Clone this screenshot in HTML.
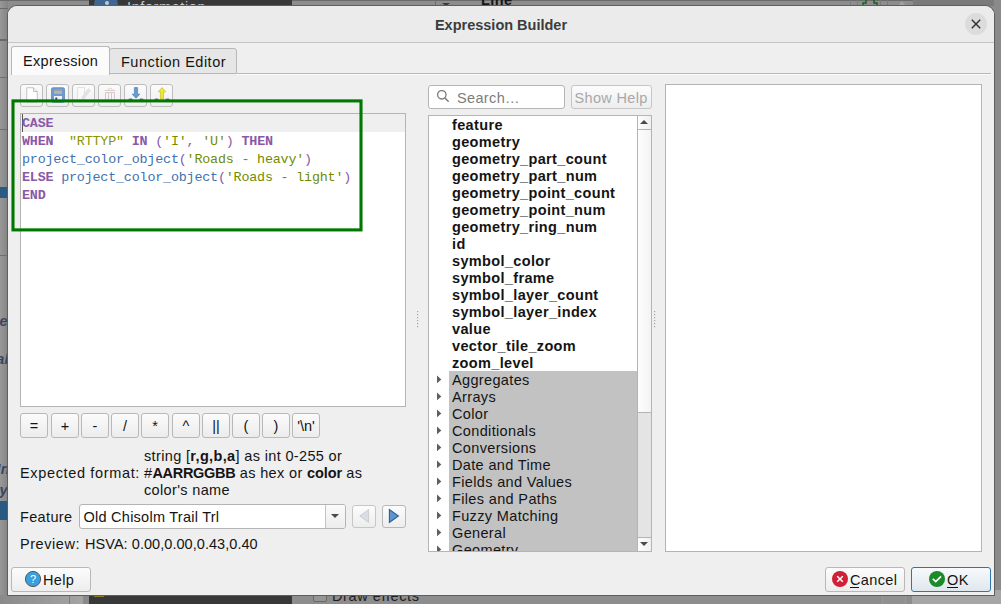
<!DOCTYPE html>
<html><head><meta charset="utf-8">
<style>
*{box-sizing:border-box;margin:0;padding:0}
html,body{width:1001px;height:604px;overflow:hidden}
body{position:relative;background:#8d8d8d;font-family:"Liberation Sans",sans-serif;font-size:14px;color:#141414}
.a{position:absolute}
.t{position:absolute;white-space:pre;line-height:17px;font-size:14.5px;letter-spacing:0.35px}
.dlg{left:8px;top:6px;width:986px;height:589px;background:#efefef;border-radius:9px 9px 0 0;box-shadow:0 0 0 1px #5e5e5e}
.btn{position:absolute;border:1px solid #b8b8b8;border-radius:3px;background:linear-gradient(#fcfcfc,#ededed)}
.mono{position:absolute;font-family:"Liberation Mono",monospace;font-size:13.4px;letter-spacing:-0.2px;line-height:18px;white-space:pre;color:#4d4d4c}
.kw{color:#8959a8;font-weight:bold}
.op{color:#8959a8}
.fn{color:#4271ae}
.st{color:#718c00}
.qi{color:#8c9400}
.ob{position:absolute;top:413px;width:28px;height:25px;border:1px solid #b8b8b8;border-radius:3px;background:linear-gradient(#fbfbfb,#ececec);text-align:center;line-height:25px;font-size:14.5px;color:#141414}
.tb{position:absolute;top:84px;width:23px;height:23px;border:1px solid #bdbdbd;border-radius:3px;background:linear-gradient(#fbfbfb,#efefef)}
.li{position:absolute;margin-top:1px;left:452px;white-space:pre;font-size:14.5px;letter-spacing:0.35px;line-height:17px}
.b{font-weight:bold}
.arr{position:absolute;left:437px;width:0;height:0;border-left:4px solid #5a5a5a;border-top:3.5px solid transparent;border-bottom:3.5px solid transparent}
</style></head><body>
<!-- background app -->
<div class="a" style="left:0;top:0;width:8px;height:604px;background:linear-gradient(90deg,#989898,#848484)"></div>
<div class="a" style="left:0;top:0;width:1001px;height:1px;background:#6a6a6a"></div>
<div class="a" style="left:0;top:8px;width:8px;height:1px;background:#6a6a6a"></div>
<div class="a" style="left:0;top:77px;width:8px;height:1px;background:#6f6f6f"></div>
<div class="a" style="left:0;top:39px;width:8px;height:2px;background:#6a6a6a"></div>
<div class="a" style="left:0;top:129px;width:8px;height:1px;background:#6f6f6f"></div>
<div class="a" style="left:0;top:255px;width:8px;height:1px;background:#6f6f6f"></div>
<div class="a" style="left:89px;top:0;width:203px;height:6px;background:#383838;overflow:hidden"><div class="a" style="left:5px;top:-7px;width:24px;height:24px;border-radius:50%;background:#3e6690"></div><div class="a" style="left:16px;top:1px;width:4px;height:4px;border-radius:50%;background:#c8c8c8"></div><div class="t" style="left:38px;top:-1px;color:#c8c8c8;letter-spacing:0.6px">Information</div></div>
<div class="a" style="left:0;top:595px;width:89px;height:9px;background:linear-gradient(90deg,#8a8a8a,#a6a6a6)"></div>
<div class="a" style="left:69px;top:595px;width:1px;height:9px;background:#7a7a7a"></div>
<div class="a" style="left:83px;top:595px;width:6px;height:9px;background:#8a8a8a"></div>
<div class="a" style="left:89px;top:595px;width:203px;height:9px;background:#383838"></div>
<div class="a" style="left:94px;top:595px;width:10px;height:2px;background:#8a7a20"></div>
<div class="a" style="left:0;top:187px;width:8px;height:11px;background:#2a5a82"></div>
<div class="a" style="left:0;top:501px;width:8px;height:19px;background:#2a5a82"></div>
<div class="a" style="left:913px;top:0;width:88px;height:6px;background:#7a7a7a"></div>
<div class="a" style="left:994px;top:0;width:7px;height:604px;background:#8a8a8a"></div>
<div class="a" style="left:313px;top:588px;width:14px;height:14px;border:1px solid #6a6a6a;border-radius:2px;background:#959595"></div>
<div class="t" style="left:332px;top:587.5px;color:#1e1e1e;letter-spacing:0.6px">Draw effects</div>
<div class="t" style="left:481px;top:-8px;color:#161616;font-weight:bold;letter-spacing:0.4px">Line</div>
<div class="a" style="left:435px;top:0;width:1px;height:6px;background:#6e6e6e"></div>
<div class="a" style="left:442px;top:3px;width:0;height:0;border-top:3px solid #3a3a3a;border-left:4px solid transparent;border-right:4px solid transparent"></div>
<svg class="a" style="left:840px;top:0" width="75" height="6"><path d="M10.5 0V6M17.5 0V6M40.5 0V6M47.5 0V6" stroke="#7a7a7a" stroke-width="1"/><path d="M26 0V3H23V6M34 0V3H37V6" fill="none" stroke="#1f5f1f" stroke-width="1.5"/><path d="M58 6L62 1L66 6" fill="#a0a0a0"/></svg>
<div class="a" style="left:0;top:300px;width:8px;height:230px;overflow:hidden">
<div class="t" style="right:0;top:13px;font-style:italic;font-weight:bold;color:#3a4660">ce</div>
<div class="t" style="right:-1px;top:51px;font-style:italic;font-weight:bold;color:#3a4660">al</div>
<div class="t" style="right:-2px;top:161px;font-style:italic;font-weight:bold;color:#3a4660">In</div>
<div class="t" style="right:0;top:182px;font-style:italic;font-weight:bold;color:#3a4660">y</div>
</div>
<div class="a" style="left:912px;top:590px;width:89px;height:14px;background:#a6a6a6"></div>
<div class="a" style="left:882px;top:592px;width:24px;height:14px;border:1px solid #9a9a9a;border-radius:3px;background:#909090"></div>
<div class="a dlg"></div>
<!-- title bar -->
<div class="a" style="left:8px;top:6px;width:986px;height:37px;background:#ebebeb;border-bottom:1px solid #c6c6c6;border-radius:9px 9px 0 0"></div>
<div class="t" style="left:8px;width:986px;top:17px;text-align:center;font-weight:bold;font-size:14.5px;letter-spacing:0;color:#3c3c3c">Expression Builder</div>
<div class="a" style="left:965px;top:13px;width:22px;height:22px;border-radius:50%;background:#dcdcdc"></div>
<svg class="a" style="left:965px;top:13px" width="22" height="22"><path d="M6.8 6.8L15.2 15.2M15.2 6.8L6.8 15.2" stroke="#2e2e2e" stroke-width="1.4"/></svg>

<!-- tabs -->
<div class="a" style="left:237px;top:73px;width:754px;height:1px;background:#b8b8b8"></div>
<div class="a" style="left:237px;top:74px;width:754px;height:1px;background:#fbfbfb"></div>
<div class="a" style="left:109px;top:48px;width:128px;height:26px;background:#e6e6e6;border:1px solid #b8b8b8;border-radius:3px 3px 0 0"></div>
<div class="a" style="left:11px;top:46px;width:99px;height:29px;background:#fbfbfb;border:1px solid #b8b8b8;border-bottom:none;border-radius:3px 3px 0 0"></div>
<div class="t" style="left:23px;top:53px">Expression</div>
<div class="t" style="left:121px;top:54px;letter-spacing:0.5px">Function Editor</div>

<!-- toolbar -->
<div class="tb" style="left:20px"></div>
<div class="tb" style="left:46px"></div>
<div class="tb" style="left:72px"></div>
<div class="tb" style="left:98px"></div>
<div class="tb" style="left:124px"></div>
<div class="tb" style="left:150px"></div>

<svg class="a" style="left:0;top:0" width="180" height="112">
<!-- new -->
<path d="M26.75 87.75H33.5L37.25 91.5V102H26.75Z" fill="#fff" stroke="#c2c2c2" stroke-width="1"/>
<path d="M33.5 87.75V91.5H37.25" fill="#f4f4f4" stroke="#b8b8b8" stroke-width="0.9"/>
<!-- save -->
<rect x="51.5" y="87.75" width="13" height="14.5" rx="1.5" fill="#6b9bd2" stroke="#5a87bd" stroke-width="0.8"/>
<rect x="54" y="89.2" width="8" height="4.6" fill="#b4b4b4"/>
<rect x="54" y="89.2" width="8" height="1.6" fill="#9a9a9a"/>
<rect x="54" y="96" width="8" height="6" fill="#f4f4f4"/>
<rect x="55.3" y="97.5" width="2" height="2.4" fill="#2b4f86"/>
<!-- edit disabled -->
<path d="M77.5 87.5H84.5V100H77.5Z" fill="#fafafa" stroke="#e2e2e2" stroke-width="1"/>
<path d="M89.6 89.2L82.2 98.6" stroke="#dcdcd4" stroke-width="3"/>
<path d="M89.6 89.2L82.2 98.6" stroke="#ececea" stroke-width="1"/>
<!-- trash disabled -->
<path d="M104.8 90.4H115.2" stroke="#d9c6c6" stroke-width="1"/>
<path d="M108.5 90V88.4H111.8V90" fill="none" stroke="#e2d4d4" stroke-width="0.8"/>
<path d="M105.5 92.5H114.5V101H105.5Z" fill="none" stroke="#d9c6c6" stroke-width="1"/>
<path d="M108.5 93V101M111.5 93V101" stroke="#d9c6c6" stroke-width="1"/>
<!-- import -->
<path d="M134.4 87.6H137.6V94.2H139.8L136 98.2L132.2 94.2H134.4Z" fill="#6a9bd0" stroke="#4f7fb4" stroke-width="0.7"/>
<path d="M129.5 99.6H131.5M140.5 99.6H142.5" stroke="#5a7a96" stroke-width="2" stroke-linecap="round"/>
<!-- export -->
<path d="M162 87.6L165.8 91.8H163.6V99H160.4V91.8H158.2Z" fill="#ece73a" stroke="#c9c21e" stroke-width="0.7"/>
<path d="M155.5 99.6H157.5M166.5 99.6H168.5" stroke="#5a7a96" stroke-width="2" stroke-linecap="round"/>
</svg>

<!-- editor -->
<div class="a" style="left:20px;top:113px;width:386px;height:294px;background:#fff;border:1px solid #b4b4b4"></div>
<div class="a" style="left:21px;top:114px;width:384px;height:18px;background:#efefef"></div>
<div class="a" style="left:22px;top:114px;width:1px;height:18px;background:#555"></div>
<div class="mono" style="left:22px;top:115px"><span class="kw">CASE</span>
<span class="kw">WHEN</span>  <span class="qi">"RTTYP"</span> <span class="kw">IN</span> <span class="op">(</span><span class="st">'I'</span><span class="op">,</span> <span class="st">'U'</span><span class="op">)</span> <span class="kw">THEN</span>
<span class="fn">project_color_object</span><span class="op">(</span><span class="st">'Roads - heavy'</span><span class="op">)</span>
<span class="kw">ELSE</span> <span class="fn">project_color_object</span><span class="op">(</span><span class="st">'Roads - light'</span><span class="op">)</span>
<span class="kw">END</span></div>

<!-- green annotation -->
<svg class="a" style="left:0;top:0" width="400" height="240"><rect x="13" y="100.9" width="348" height="129" fill="none" stroke="#007800" stroke-width="3.1"/></svg>

<!-- operator buttons -->
<div class="ob" style="left:20px">=</div>
<div class="ob" style="left:51px">+</div>
<div class="ob" style="left:81px">-</div>
<div class="ob" style="left:111px">/</div>
<div class="ob" style="left:141px">*</div>
<div class="ob" style="left:172px">^</div>
<div class="ob" style="left:202px">||</div>
<div class="ob" style="left:232px">(</div>
<div class="ob" style="left:262px">)</div>
<div class="ob" style="left:292px">'\n'</div>

<!-- expected format -->
<div class="t" style="left:20px;top:465px;letter-spacing:0.65px">Expected format:</div>
<div class="t" style="left:144px;top:448px">string [<span class="b">r,g,b,a</span>] as int 0-255 or</div>
<div class="t" style="left:144px;top:465px">#<span class="b" style="letter-spacing:-0.3px">AARRGGBB</span> as hex or <span class="b" style="letter-spacing:-0.1px">color</span> as</div>
<div class="t" style="left:144px;top:482px">color's name</div>

<!-- feature -->
<div class="t" style="left:20px;top:509px">Feature</div>
<div class="a" style="left:79px;top:504px;width:267px;height:25px;background:#fff;border:1px solid #b4b4b4;border-radius:3px"></div>
<div class="a" style="left:325px;top:505px;width:20px;height:23px;background:linear-gradient(#fbfbfb,#ececec);border-left:1px solid #c4c4c4;border-radius:0 2px 2px 0"></div>
<div class="a" style="left:330.5px;top:514px;width:0;height:0;border-top:4.5px solid #4a4a4a;border-left:4px solid transparent;border-right:4px solid transparent"></div>
<div class="t" style="left:83.5px;top:509px;letter-spacing:0.25px">Old Chisolm Trail Trl</div>
<div class="btn" style="left:352px;top:505px;width:24px;height:23px;border-color:#c6c6c6"></div>
<div class="btn" style="left:382px;top:505px;width:24px;height:23px"></div>
<svg class="a" style="left:352px;top:505px" width="54" height="23"><path d="M16.6 4.6V17.4L7.8 11Z" fill="#d9dee3" stroke="#c6cacd" stroke-width="0.9"/><path d="M37.4 4.6V17.4L46.4 11Z" fill="#5f95cf" stroke="#2c5d95" stroke-width="1.1"/></svg>

<!-- preview -->
<div class="t" style="left:20px;top:536px;letter-spacing:0.55px">Preview:</div>
<div class="t" style="left:85px;top:536px;letter-spacing:0.05px">HSVA: 0.00,0.00,0.43,0.40</div>

<!-- search -->
<div class="a" style="left:428px;top:85px;width:137px;height:24px;background:#fff;border:1px solid #b4b4b4;border-radius:3px"></div>
<div class="t" style="left:457px;top:89.5px;color:#7d7d7d">Search…</div>
<svg class="a" style="left:426px;top:82px" width="30" height="30"><circle cx="15.8" cy="12.8" r="4.2" fill="none" stroke="#7a7a7a" stroke-width="1.3"/><path d="M18.9 16L22.2 19.3" stroke="#7a7a7a" stroke-width="1.5" stroke-linecap="round"/></svg>
<div class="btn" style="left:571px;top:85px;width:81px;height:24px;border-color:#c6c6c6"></div>
<div class="t" style="left:574.5px;top:89.5px;color:#a8a8a8">Show Help</div>

<!-- list -->
<div class="a" style="left:428px;top:115px;width:224px;height:437px;background:#fff;border:1px solid #b4b4b4"></div>
<div class="a" style="left:449px;top:371px;width:188px;height:180px;background:#c2c2c2"></div>
<div class="a" style="left:429px;top:116px;width:208px;height:435px;overflow:hidden">
</div>
<div class="li b" style="top:116px">feature</div>
<div class="li b" style="top:133px">geometry</div>
<div class="li b" style="top:150px">geometry_part_count</div>
<div class="li b" style="top:167px">geometry_part_num</div>
<div class="li b" style="top:184px">geometry_point_count</div>
<div class="li b" style="top:201px">geometry_point_num</div>
<div class="li b" style="top:218px">geometry_ring_num</div>
<div class="li b" style="top:235px">id</div>
<div class="li b" style="top:252px">symbol_color</div>
<div class="li b" style="top:269px">symbol_frame</div>
<div class="li b" style="top:286px">symbol_layer_count</div>
<div class="li b" style="top:303px">symbol_layer_index</div>
<div class="li b" style="top:320px">value</div>
<div class="li b" style="top:337px">vector_tile_zoom</div>
<div class="li b" style="top:354px">zoom_level</div>
<div class="li" style="top:371px">Aggregates</div>
<div class="li" style="top:388px">Arrays</div>
<div class="li" style="top:405px">Color</div>
<div class="li" style="top:422px">Conditionals</div>
<div class="li" style="top:439px">Conversions</div>
<div class="li" style="top:456px">Date and Time</div>
<div class="li" style="top:473px">Fields and Values</div>
<div class="li" style="top:490px">Files and Paths</div>
<div class="li" style="top:507px">Fuzzy Matching</div>
<div class="li" style="top:524px">General</div>
<div class="a" style="left:429px;top:541px;width:208px;height:10px;overflow:hidden"><div class="li" style="left:23px;top:0">Geometry</div></div>
<svg class="a" style="left:0;top:0" width="450" height="551"><path d="M437 375.6L441.3 379.4L437 383.2Z" fill="#5e5e5e"/><path d="M437 392.6L441.3 396.4L437 400.2Z" fill="#5e5e5e"/><path d="M437 409.6L441.3 413.4L437 417.2Z" fill="#5e5e5e"/><path d="M437 426.6L441.3 430.4L437 434.2Z" fill="#5e5e5e"/><path d="M437 443.6L441.3 447.4L437 451.2Z" fill="#5e5e5e"/><path d="M437 460.6L441.3 464.4L437 468.2Z" fill="#5e5e5e"/><path d="M437 477.6L441.3 481.4L437 485.2Z" fill="#5e5e5e"/><path d="M437 494.6L441.3 498.4L437 502.2Z" fill="#5e5e5e"/><path d="M437 511.6L441.3 515.4L437 519.2Z" fill="#5e5e5e"/><path d="M437 528.6L441.3 532.4L437 536.2Z" fill="#5e5e5e"/><path d="M437 545.6L441.3 549.4L437 553.2Z" fill="#5e5e5e"/></svg>
<!-- scrollbar -->
<div class="a" style="left:637px;top:116px;width:14px;height:435px;background:#e4e4e4;border-left:1px solid #b4b4b4"></div>
<div class="a" style="left:638px;top:116px;width:13px;height:14px;background:linear-gradient(90deg,#fdfdfd,#f0f0f0);border-bottom:1px solid #b4b4b4"></div>
<div class="a" style="left:638px;top:130px;width:13px;height:283px;background:linear-gradient(90deg,#fdfdfd,#f3f3f3);border-bottom:1px solid #b4b4b4"></div>
<div class="a" style="left:638px;top:537px;width:13px;height:14px;background:linear-gradient(90deg,#fdfdfd,#f0f0f0);border-top:1px solid #b4b4b4"></div>
<div class="a" style="left:640px;top:120px;width:0;height:0;border-bottom:4px solid #4a4a4a;border-left:4px solid transparent;border-right:4px solid transparent"></div>
<div class="a" style="left:640px;top:542px;width:0;height:0;border-top:4px solid #4a4a4a;border-left:4px solid transparent;border-right:4px solid transparent"></div>

<svg class="a" style="left:0;top:0" width="700" height="340"><rect x="417" y="311" width="1.2" height="1.2" fill="#a4a4a4"/><rect x="417" y="314" width="1.2" height="1.2" fill="#a4a4a4"/><rect x="417" y="317" width="1.2" height="1.2" fill="#a4a4a4"/><rect x="417" y="320" width="1.2" height="1.2" fill="#a4a4a4"/><rect x="417" y="323" width="1.2" height="1.2" fill="#a4a4a4"/><rect x="417" y="326" width="1.2" height="1.2" fill="#a4a4a4"/><rect x="654" y="311" width="1.2" height="1.2" fill="#a4a4a4"/><rect x="654" y="314" width="1.2" height="1.2" fill="#a4a4a4"/><rect x="654" y="317" width="1.2" height="1.2" fill="#a4a4a4"/><rect x="654" y="320" width="1.2" height="1.2" fill="#a4a4a4"/><rect x="654" y="323" width="1.2" height="1.2" fill="#a4a4a4"/><rect x="654" y="326" width="1.2" height="1.2" fill="#a4a4a4"/></svg>
<!-- help panel -->
<div class="a" style="left:665px;top:84px;width:317px;height:468px;background:#fff;border:1px solid #b4b4b4"></div>

<!-- bottom buttons -->
<div class="btn" style="left:11px;top:567px;width:80px;height:25px"></div>
<svg class="a" style="left:24px;top:570px" width="18" height="18"><circle cx="9" cy="9" r="7.6" fill="#3a9fe0" stroke="#585858" stroke-width="1"/><text x="9" y="13.3" text-anchor="middle" font-family="Liberation Sans" font-size="11" fill="#fff">?</text></svg>
<div class="t" style="left:43px;top:571.5px">Help</div>
<div class="btn" style="left:825px;top:567px;width:80px;height:25px"></div>
<svg class="a" style="left:831px;top:570px" width="18" height="18"><circle cx="9" cy="9" r="8" fill="#d01f37"/><path d="M6.2 6.2L11.8 11.8M11.8 6.2L6.2 11.8" stroke="#fff" stroke-width="1.6"/></svg>
<div class="t" style="left:850px;top:571.5px">Cancel</div>
<div class="a" style="left:850px;top:587px;width:9px;height:1px;background:#141414"></div>
<div class="btn" style="left:911px;top:567px;width:80px;height:25px;border-color:#2f74ad;background:linear-gradient(#f7fafc,#dfe7ee)"></div>
<svg class="a" style="left:928px;top:570px" width="18" height="18"><circle cx="9" cy="9" r="8" fill="#1a8a2a"/><path d="M4.8 8.8L7.8 11.6L13 6.4" fill="none" stroke="#fff" stroke-width="1.7"/></svg>
<div class="t" style="left:947px;top:571.5px">OK</div>
<div class="a" style="left:947px;top:587px;width:11px;height:1px;background:#141414"></div>
</body></html>
